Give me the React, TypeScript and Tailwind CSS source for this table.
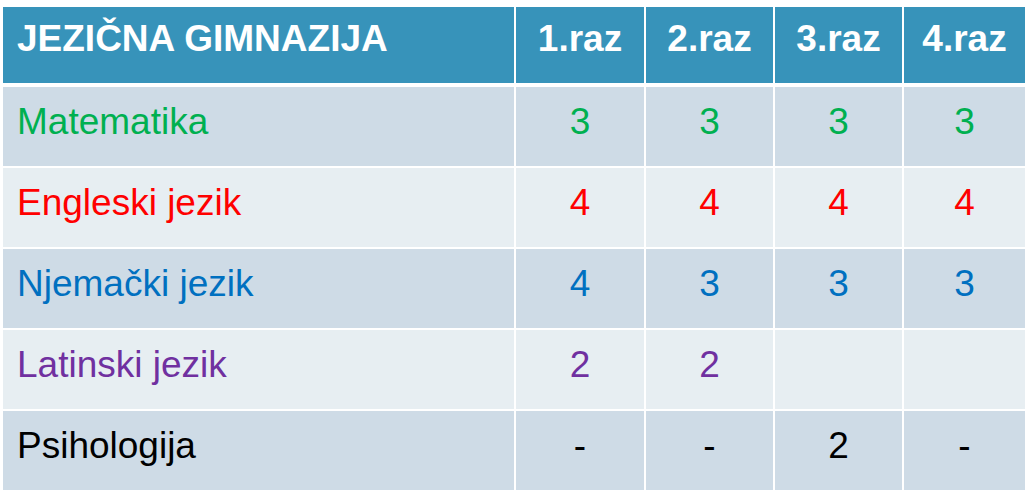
import React from 'react';

type Row = { name: string; color: string; values: string[] };

const rows: Row[] = [
  { name: 'Matematika', color: 'text-[#00b050]', values: ['3', '3', '3', '3'] },
  { name: 'Engleski jezik', color: 'text-[#ff0000]', values: ['4', '4', '4', '4'] },
  { name: 'Njemački jezik', color: 'text-[#0070c0]', values: ['4', '3', '3', '3'] },
  { name: 'Latinski jezik', color: 'text-[#7030a0]', values: ['2', '2', '', ''] },
  { name: 'Psihologija', color: 'text-black', values: ['-', '-', '2', '-'] },
];

const cols = 'grid grid-cols-[511px_128px_127px_127px_121px] gap-x-[2px]';

export default function App() {
  return (
    <div className="w-[1031px] h-[493px] overflow-hidden bg-white pt-[7px] pl-[3px] font-['Liberation_Sans',Arial,sans-serif]">
      {/* header */}
      <div className={cols}>
        <div className="h-[76px] bg-[#3793ba] pl-[14px] pt-[13px] text-[37px] leading-[37px] font-bold text-white">
          JEZIČNA GIMNAZIJA
        </div>
        {['1.raz', '2.raz', '3.raz', '4.raz'].map(h => (
          <div key={h} className="h-[76px] bg-[#3793ba] pt-[13px] text-center text-[37px] leading-[37px] font-bold text-white">
            {h}
          </div>
        ))}
      </div>

      <div className="mt-[4px] flex flex-col gap-y-[2px]">
        {rows.map((row, i) => {
          const bg = i % 2 === 0 ? 'bg-[#cedbe6]' : 'bg-[#e7eef2]';
          return (
            <div key={row.name} className={cols}>
              <div className={`h-[79px] ${bg} pl-[14px] pt-[16px] text-[37px] leading-[37px] ${row.color}`}>
                {row.name}
              </div>
              {row.values.map((v, j) => (
                <div key={j} className={`h-[79px] ${bg} pt-[16px] text-center text-[37px] leading-[37px] ${row.color}`}>
                  {v}
                </div>
              ))}
            </div>
          );
        })}
      </div>
    </div>
  );
}
